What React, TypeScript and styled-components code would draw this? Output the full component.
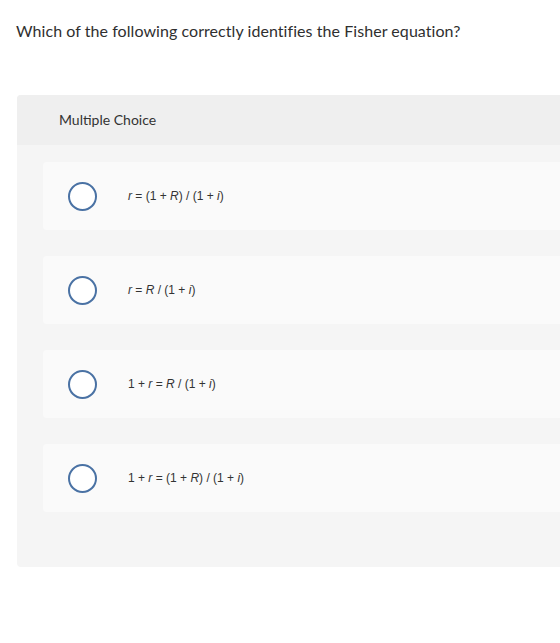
import styled, { createGlobalStyle } from 'styled-components';

const GlobalStyle = createGlobalStyle`
  body {
    margin: 0;
    background-color: #ffffff;
    font-family: Lato, "Open Sans", Arial, sans-serif;
    color: #333333;
    overflow: hidden;
  }
`;

const Page = styled.div`
  padding-top: 21px;
`;

const Question = styled.p`
  margin: 0 0 0 16px;
  font-size: 16px;
  line-height: 20px;
  letter-spacing: 0.06px;
  color: #2f2f2f;
`;

const Panel = styled.section`
  margin: 54px 0 0 17px;
  width: 620px;
  border-radius: 4px;
  overflow: hidden;
  background-color: #f5f5f5;
`;

const PanelHeader = styled.div`
  height: 50px;
  box-sizing: border-box;
  display: flex;
  align-items: center;
  padding: 0 0 2px 42px;
  background-color: #efefef;
  font-size: 14px;
  color: #333333;
`;

const Choices = styled.div`
  display: flex;
  flex-direction: column;
  gap: 26px;
  padding: 17px 0 55px 26px;
`;

const Choice = styled.label`
  height: 68px;
  display: flex;
  align-items: center;
  gap: 31px;
  padding-left: 25px;
  background-color: #fafafa;
  border-radius: 4px 0 0 4px;
  cursor: pointer;
`;

const Radio = styled.span`
  width: 29px;
  height: 29px;
  box-sizing: border-box;
  border-radius: 50%;
  border: 2px solid #4a72a4;
  background-color: #ffffff;
  flex-shrink: 0;
`;

const Formula = styled.span`
  font-family: "Liberation Sans", Arial, sans-serif;
  font-size: 12px;
  color: #333333;

  i {
    font-style: italic;
  }
`;

const options = [
  <>
    <i>r</i> = (1 + <i>R</i>) / (1 + <i>i</i>)
  </>,
  <>
    <i>r</i> = <i>R</i> / (1 + <i>i</i>)
  </>,
  <>
    1 + <i>r</i> = <i>R</i> / (1 + <i>i</i>)
  </>,
  <>
    1 + <i>r</i> = (1 + <i>R</i>) / (1 + <i>i</i>)
  </>,
];

export default function App() {
  return (
    <Page>
      <GlobalStyle />
      <Question>Which of the following correctly identifies the Fisher equation?</Question>
      <Panel>
        <PanelHeader>Multiple Choice</PanelHeader>
        <Choices>
          {options.map((content, idx) => (
            <Choice key={idx}>
              <Radio />
              <Formula>{content}</Formula>
            </Choice>
          ))}
        </Choices>
      </Panel>
    </Page>
  );
}
